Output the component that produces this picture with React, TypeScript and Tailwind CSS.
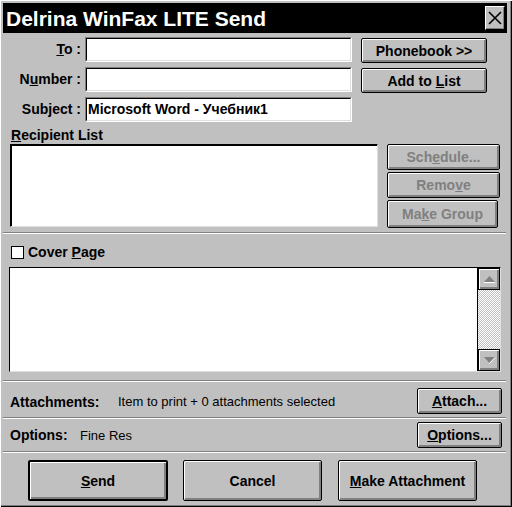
import React from 'react';

const Btn = ({ children, className = '', disabled = false, isDefault = false }: { children: React.ReactNode; className?: string; disabled?: boolean; isDefault?: boolean }) => (
  <div
    className={`flex items-center justify-center rounded-[2px] bg-[#c0c0c0] text-[14px] font-bold leading-none shadow-[inset_1px_1px_0_#fff,inset_-2px_-2px_0_#808080] ${isDefault ? 'border-2' : 'border'} border-black ${disabled ? 'text-[#808080]' : 'text-black'} ${className}`}
  >
    {children}
  </div>
);

const Field = ({ text = '' }: { text?: string }) => (
  <div className="h-[25px] w-[267px] border border-t-[#808080] border-l-[#808080] border-b-white border-r-white">
    <div className="flex h-full items-center border border-t-black border-l-black border-b-[#dfdfdf] border-r-[#dfdfdf] bg-white pl-[1px] text-[14px] font-bold text-black">
      {text}
    </div>
  </div>
);

const Separator = ({ className = '' }: { className?: string }) => (
  <div className={`mr-[1px] h-[2px] border-t border-b border-t-[#808080] border-b-white ${className}`} />
);

const Arrow = ({ up }: { up: boolean }) => (
  <svg width="13" height="8" viewBox="0 0 13 8">
    {up ? (
      <>
        <polygon points="6.5,1 12,7 1,7" fill="#808080" />
        <line x1="1" y1="7.5" x2="12" y2="7.5" stroke="#fff" />
      </>
    ) : (
      <>
        <polygon points="1,1 12,1 6.5,7" fill="#808080" />
        <line x1="6.5" y1="7.5" x2="12" y2="1.5" stroke="#fff" />
      </>
    )}
  </svg>
);

const ScrollBtn = ({ up }: { up: boolean }) => (
  <div className="flex h-[22px] w-[22px] items-center justify-center border border-black bg-[#c0c0c0] shadow-[inset_1px_1px_0_#fff,inset_-2px_-2px_0_#808080]">
    <Arrow up={up} />
  </div>
);

export default function App() {
  return (
    <div className="h-[507px] w-[512px] bg-[#c0c0c0] pt-[3px] pl-[3px] pr-[5px] pb-[3px] font-['Liberation_Sans',Arial,sans-serif] shadow-[inset_1px_1px_0_#fff,inset_-1px_-1px_0_#000,inset_-2px_-2px_0_#808080]">
      {/* title bar */}
      <div className="flex h-[30px] items-center justify-between bg-black pl-[3px] pr-[2px]">
        <span className="text-[21px] font-bold leading-none text-white">Delrina WinFax LITE Send</span>
        <div className="flex h-[24px] w-[20px] items-center justify-center border border-t-white border-l-white border-b-black border-r-black bg-[#c0c0c0] shadow-[inset_-1px_-1px_0_#808080]">
          <svg width="14" height="14" viewBox="0 0 14 14">
            <path d="M1 1 L13 13 M13 1 L1 13" stroke="#000" strokeWidth="1.6" />
          </svg>
        </div>
      </div>

      <div className="flex h-[470px] flex-col">
        {/* address rows */}
        <div className="flex flex-col gap-[5px] pt-[4px]">
          <div className="flex h-[25px] items-center">
            <div className="w-[79px] pr-[1px] text-right text-[14px] font-bold text-black"><u>T</u>o :</div>
            <div className="ml-[3px]"><Field /></div>
            <Btn className="ml-[9px] mt-[2px] h-[25px] w-[126px]">Phonebook &gt;&gt;</Btn>
          </div>
          <div className="flex h-[25px] items-center">
            <div className="w-[79px] pr-[1px] text-right text-[14px] font-bold text-black">N<u>u</u>mber :</div>
            <div className="ml-[3px]"><Field /></div>
            <Btn className="ml-[9px] mt-[2px] h-[25px] w-[126px]">Add to <u className="ml-[4px]">L</u>ist</Btn>
          </div>
          <div className="flex h-[25px] items-center">
            <div className="w-[79px] pr-[1px] text-right text-[14px] font-bold text-black">Sub<u>j</u>ect :</div>
            <div className="ml-[3px]"><Field text="Microsoft Word - Учебник1" /></div>
          </div>
        </div>

        {/* recipient list */}
        <div className="h-[22px] pl-[8px] pt-[5px] text-[14px] font-bold leading-[16px] text-black">
          <u>R</u>ecipient List
        </div>
        <div className="flex">
          <div className="ml-[7px] h-[83px] w-[368px] border border-t-black border-l-black border-b-[#dfdfdf] border-r-[#dfdfdf] bg-white shadow-[inset_1px_1px_0_#000]" />
          <div className="ml-[9px] flex flex-col gap-[2px]">
            <Btn disabled className="h-[26px] w-[113px]">Sch<u>e</u>dule...</Btn>
            <Btn disabled className="h-[26px] w-[113px]">Remo<u>v</u>e</Btn>
            <Btn disabled className="h-[28px] w-[111px]">Ma<u>k</u>e Group</Btn>
          </div>
        </div>

        <Separator className="mt-[4px]" />

        {/* cover page */}
        <div className="mt-[11px] flex h-[14px] items-center pl-[8px]">
          <div className="h-[13px] w-[13px] border border-black bg-white" />
          <span className="ml-[4px] text-[14px] font-bold text-black">Cover <u>P</u>age</span>
        </div>
        <div className="ml-[6px] mt-[8px] flex h-[105px] w-[492px] border border-t-black border-l-black border-b-[#dfdfdf] border-r-[#dfdfdf] bg-white">
          <div className="flex-1" />
          <div className="flex w-[23px] flex-col border-l border-black">
            <ScrollBtn up />
            <div className="flex-1 bg-[repeating-conic-gradient(#c0c0c0_0_25%,#ffffff_0_50%)] bg-[length:2px_2px]" />
            <ScrollBtn up={false} />
          </div>
        </div>

        <Separator className="mt-[8px]" />

        {/* attachments */}
        <div className="mt-[6px] flex h-[25px] items-center">
          <span className="ml-[7px] w-[108px] pt-[3px] text-[14px] font-bold text-black">Attachments:</span>
          <span className="pt-[3px] text-[13px] text-black">Item to print + 0 attachments selected</span>
          <Btn className="ml-auto mr-[5px] h-[26px] w-[85px]"><u>A</u>ttach...</Btn>
        </div>

        <Separator className="mt-[4px]" />

        {/* options */}
        <div className="mt-[3px] flex h-[25px] items-center">
          <span className="ml-[7px] w-[70px] pt-[2px] text-[14px] font-bold text-black">Options:</span>
          <span className="pt-[2px] text-[13px] text-black">Fine Res</span>
          <Btn className="ml-auto mr-[5px] h-[26px] w-[85px]"><u>O</u>ptions...</Btn>
        </div>

        <Separator className="mt-[4px]" />

        {/* bottom buttons */}
        <div className="mt-[7px] flex pl-[25px]">
          <Btn isDefault className="h-[41px] w-[140px]"><u>S</u>end</Btn>
          <Btn className="ml-[15px] h-[41px] w-[139px]">Cancel</Btn>
          <Btn className="ml-[16px] h-[41px] w-[139px]"><u>M</u>ake Attachment</Btn>
        </div>
      </div>
    </div>
  );
}
